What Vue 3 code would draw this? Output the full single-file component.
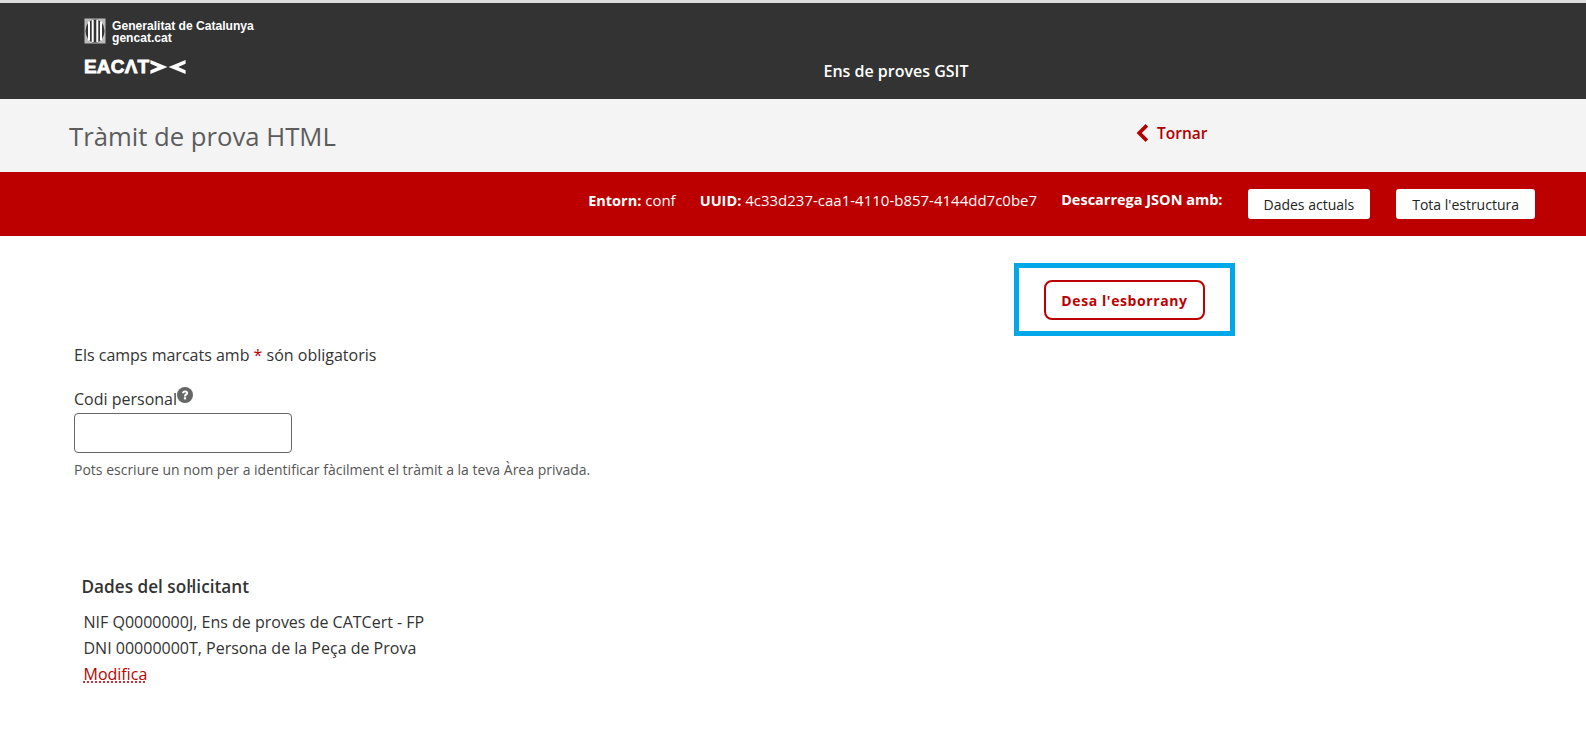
<script setup>
const applicant = [
  'NIF Q0000000J, Ens de proves de CATCert - FP',
  'DNI 00000000T, Persona de la Peça de Prova'
]
</script>

<template>
  <div class="page">
    <header class="top">
      <div class="brand">
        <div class="gen">
          <svg class="emblem" viewBox="0 0 22 26" width="22" height="26">
            <rect x="0.5" y="0.5" width="21" height="25" fill="#bbb" />
            <ellipse cx="11" cy="13" rx="9.500" ry="11.500" fill="#333" />
            <path d="M5 3.500v19M8.700 2v22M13.300 2v22M17 3.500v19" stroke="#fff" stroke-width="2" />
          </svg>
          <div class="gen-text"><div>Generalitat de Catalunya</div><div>gencat.cat</div></div>
        </div>
        <div class="eacat">
          <span>EACΛT</span>
          <svg viewBox="0 0 33 15" width="36" height="16">
            <path d="M0 1l16 6.500L0 14v-3.500L7 7.500 0 4.500zM33 1L17 7.500 33 14v-3.500L26 7.500 33 4.500z" fill="#fff" />
          </svg>
        </div>
      </div>
      <div class="ens">Ens de proves GSIT</div>
    </header>

    <div class="titlebar">
      <h1>Tràmit de prova HTML</h1>
      <a class="back">
        <svg viewBox="0 0 12 18" width="13" height="20">
          <path d="M10 2L3 9l7 7" fill="none" stroke="#b00000" stroke-width="3.400" />
        </svg>
        <span>Tornar</span>
      </a>
    </div>

    <div class="redbar">
      <span class="info"><b>Entorn:</b> conf</span>
      <span class="info uuid"><b>UUID:</b> 4c33d237-caa1-4110-b857-4144dd7c0be7</span>
      <b class="info dl">Descarrega JSON amb:</b>
      <button class="white first">Dades actuals</button>
      <button class="white">Tota l'estructura</button>
    </div>

    <div class="draft-row">
      <div class="mark"><button class="draft">Desa l'esborrany</button></div>
    </div>

    <main class="form">
      <p class="req">Els camps marcats amb <span class="star">*</span> són obligatoris</p>
      <div class="label">
        Codi personal<svg viewBox="0 0 16 16" width="16" height="16" class="help">
          <circle cx="8" cy="8" r="8" fill="#666" />
          <path d="M5 6.300C5 4.600 6.300 3.400 8.200 3.400c1.800 0 3 1 3 2.500 0 2-2.100 2-2.100 3.500H6.900c0-2.300 2-2.400 2-3.400 0-.5-.3-.8-.8-.8-.6 0-.9.400-.9 1.100z" fill="#fff" />
          <rect x="6.900" y="10.200" width="2.200" height="2.200" fill="#fff" />
        </svg>
      </div>
      <input class="code" type="text" />
      <p class="hint">Pots escriure un nom per a identificar fàcilment el tràmit a la teva Àrea privada.</p>

      <section class="applicant">
        <h2>Dades del soŀlicitant</h2>
        <div class="lines">
          <div v-for="line in applicant" :key="line">{{ line }}</div>
          <a class="modify">Modifica</a>
        </div>
      </section>
    </main>
  </div>
</template>

<style scoped>
.page {
  width: 1586px;
  height: 744px;
  overflow: hidden;
  background: #fff;
  font-family: "Open Sans", sans-serif;
  color: #333;
}
.top {
  box-sizing: border-box;
  height: 99px;
  background: #333;
  border-top: 3px solid #ddd;
  position: relative;
  padding: 15px 0 0 84px;
}
.brand { display: flex; flex-direction: column; }
.gen { display: flex; align-items: center; gap: 6px; }
.emblem { display: block; }
.gen-text {
  font-family: "Liberation Sans", sans-serif;
  font-weight: 700;
  font-size: 12.100px;
  line-height: 12px;
  color: #fff;
  padding-top: 2px;
}
.eacat {
  display: flex;
  align-items: center;
  margin-top: 13px;
  gap: 1px;
}
.eacat span {
  font-family: "Liberation Sans", sans-serif;
  font-weight: 700;
  font-size: 19px;
  line-height: 19px;
  color: #fff;
  -webkit-text-stroke: 0.8px #fff;
  letter-spacing: 0.2px;
}
.ens {
  position: absolute;
  left: 0;
  right: 0;
  top: 57px;
  text-align: center;
  padding-left: 206px;
  color: #fff;
  font-weight: 600;
  font-size: 16px;
  line-height: 22px;
}
.titlebar {
  box-sizing: border-box;
  height: 73px;
  background: #f4f4f5;
  display: flex;
  align-items: flex-start;
  padding: 0 0 0 69px;
}
.titlebar h1 {
  margin: 20px 0 0;
  width: 1067px;
  font-weight: 400;
  font-size: 25.700px;
  line-height: 36px;
  color: #5c5c5c;
}
.back {
  display: flex;
  align-items: center;
  gap: 8px;
  margin-top: 22px;
  color: #b00000;
  font-weight: 600;
  font-size: 15.500px;
  line-height: 24px;
}
.redbar {
  box-sizing: border-box;
  height: 64px;
  background: #bc0000;
  display: flex;
  justify-content: flex-end;
  align-items: flex-start;
  padding: 17px 51px 0 0;
  color: #fff;
  font-size: 15px;
  line-height: 22px;
}
.info b { font-weight: 700; font-size: 14.500px; }
b.info { font-weight: 700; }
.uuid { margin-left: 24px; }
.dl { margin-left: 24px; font-size: 14.500px; }
.white {
  box-sizing: border-box;
  height: 30px;
  border: 0;
  border-radius: 3px;
  background: #fff;
  color: #222;
  font-family: inherit;
  font-size: 14px;
  padding: 0 16px;
  margin-left: 26px;
}
.white.first { margin-left: 25px; }
.draft-row { padding: 27px 0 0 1014px; }
.mark {
  box-sizing: border-box;
  width: 221px;
  height: 73px;
  border: 5px solid #00a8e8;
  display: flex;
  align-items: center;
  justify-content: center;
}
.draft {
  box-sizing: border-box;
  width: 161px;
  height: 40px;
  margin-top: 1px;
  border: 2px solid #bc0000;
  border-radius: 8px;
  background: #fff;
  color: #bc0000;
  font-family: inherit;
  font-weight: 700;
  font-size: 14px;
  letter-spacing: 0.6px;
}
.form { padding: 8px 0 0 74px; font-size: 16px; }
.req { margin: 0; line-height: 22px; }
.star { color: #bc0000; }
.label { margin-top: 21px; line-height: 24px; height: 26px; display: flex; align-items: flex-start; }
.help { margin-top: 0; }
.code {
  display: block;
  box-sizing: border-box;
  width: 218px;
  height: 40px;
  border: 1px solid #666;
  border-radius: 4px;
  background: #fff;
}
.hint {
  margin: 8px 0 0;
  font-size: 14px;
  line-height: 18px;
  color: #555;
}
.applicant { margin-top: 96px; }
.applicant h2 {
  margin: 0 0 0 7.500px;
  font-size: 17.200px;
  font-weight: 600;
  line-height: 24px;
}
.lines {
  margin: 10px 0 0 9.500px;
  line-height: 26px;
  font-size: 16px;
}
.modify {
  display: inline-block;
  color: #bc0000;
  line-height: 26px;
  text-decoration: underline dotted #bc0000;
  text-underline-offset: 2px;
}
</style>
